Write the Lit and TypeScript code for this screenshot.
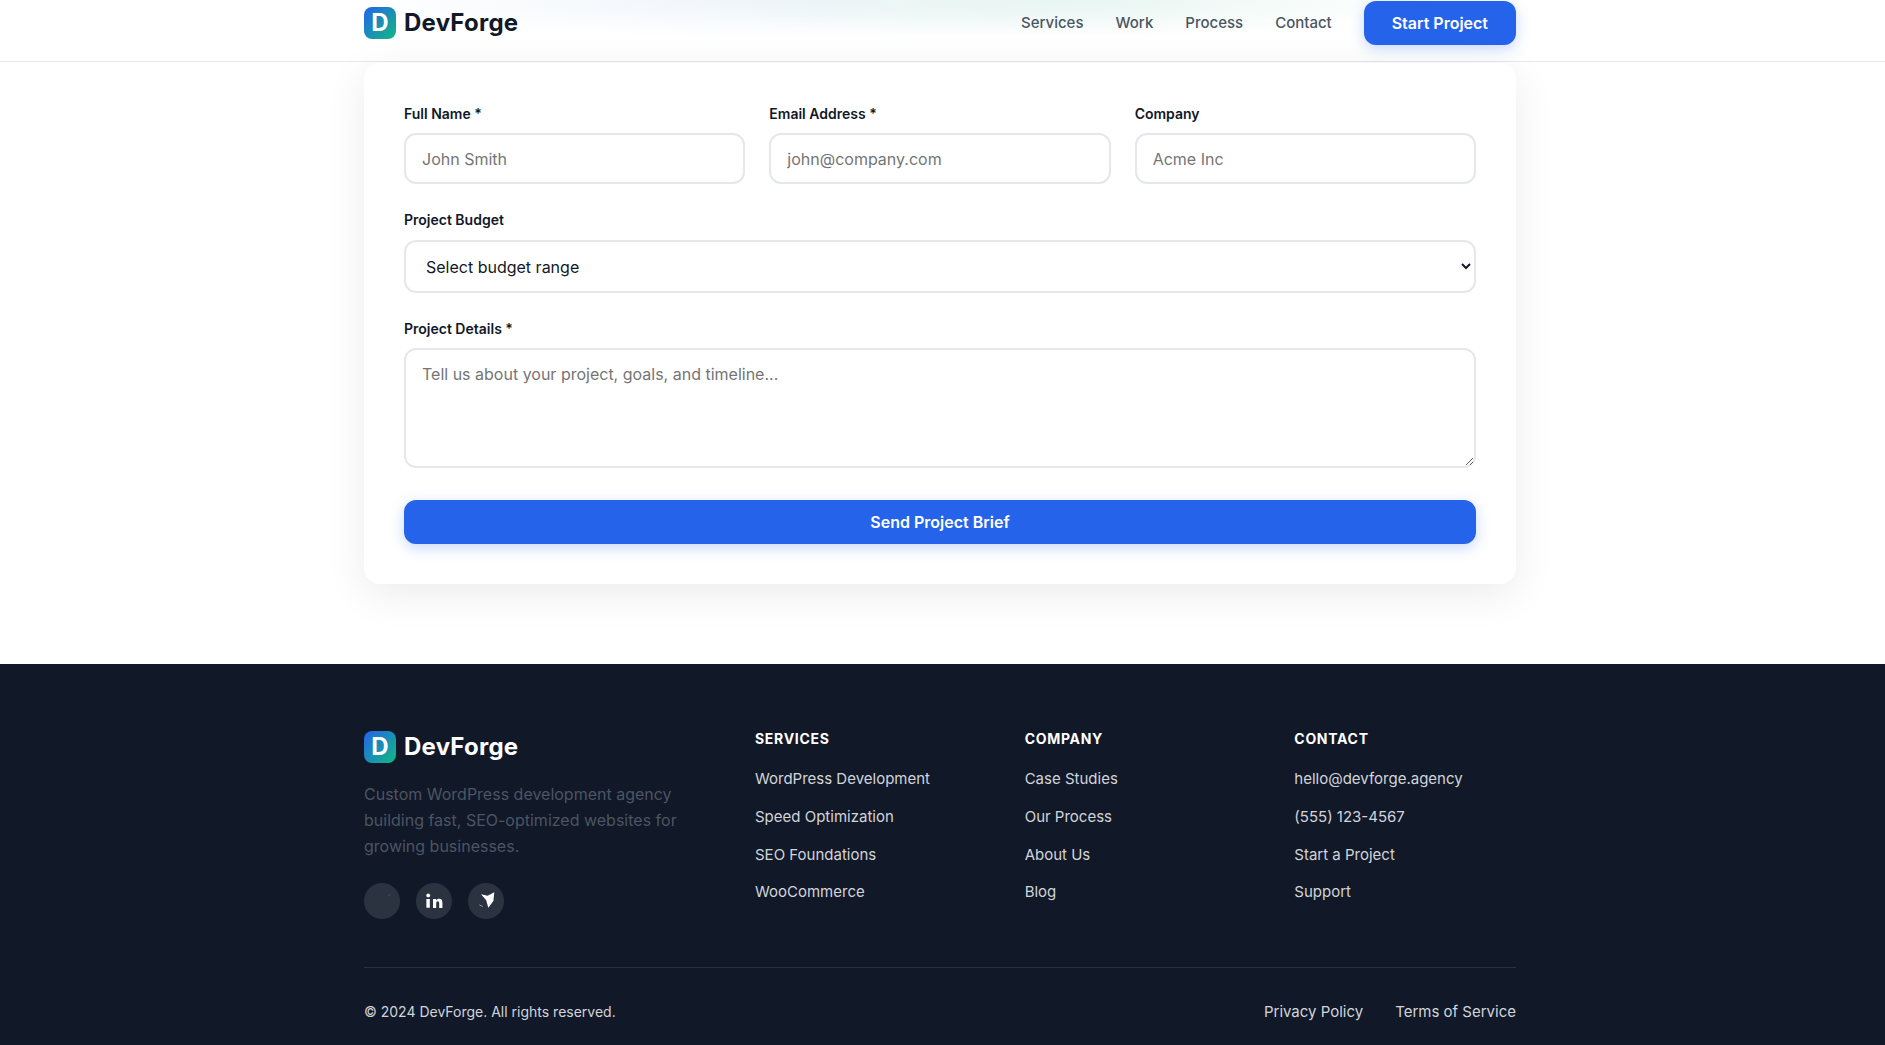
import { LitElement, html, css, svg } from 'lit';
import { customElement } from 'lit/decorators.js';

const navLinks = ['Services', 'Work', 'Process', 'Contact'];

const footerColumns = [
  { title: 'Services', links: ['WordPress Development', 'Speed Optimization', 'SEO Foundations', 'WooCommerce'] },
  { title: 'Company', links: ['Case Studies', 'Our Process', 'About Us', 'Blog'] },
  { title: 'Contact', links: ['hello@devforge.agency', '(555) 123-4567', 'Start a Project', 'Support'] }
];

// the social glyphs are half broken in the reference, so they are traced as they appear
const socialIcons = [
  svg`<path d="M23.3 12.9 26.6 11.2 26.4 11.7 23.6 13.1Z" fill="#8b929c" />`,
  svg`<circle cx="12.2" cy="12.4" r="1.9" fill="#fff" />
    <path d="M10.4 16h3.4v8.8h-3.4zM17 16h3.2v1.4c.8-1.1 1.7-1.7 3-1.7 2.4 0 3.2 1.6 3.2 4.2v5h-3.2v-4.5c0-1.4-.4-2.1-1.4-2.1s-1.6.8-1.6 2.1v4.5H17z" fill="#fff" />`,
  svg`<path d="M13 11.2 19.6 12.8 26.3 9.3 25.4 18 20.3 24.8 18.2 17.2Z" fill="#fff" />
    <path d="M11.3 21.4 14.8 23.2 14.4 23.7 11.2 22Z" fill="#d1d5db" />`
];

@customElement('app-root')
export default class AppRoot extends LitElement {
  static styles = css`
    :host {
      display: flex;
      flex-direction: column;
      height: 1045px;
      overflow: hidden;
      background-color: #fff;
      color: #111827;
      font-family: Inter, 'Liberation Sans', sans-serif;
      line-height: 1.6;
    }

    .container {
      width: 1152px;
      margin-left: 364px;
    }

    .header {
      flex: none;
      height: 61px;
      border-bottom: 1px solid #e5e7eb;
      background-color: #fff;
      background-image:
        radial-gradient(ellipse 380px 38px at 1060px 0, #e7f6f1, rgba(255, 255, 255, 0)),
        radial-gradient(ellipse 460px 38px at 800px 0, #eef4fa, rgba(255, 255, 255, 0));
    }

    .header-row {
      display: flex;
      align-items: center;
      justify-content: space-between;
      padding-top: 1px;
      height: 44px;
    }

    .logo {
      display: flex;
      align-items: center;
      gap: 8px;
      font-size: 24px;
      font-weight: 700;
      letter-spacing: 0.01em;
    }

    .logo-mark {
      display: flex;
      align-items: center;
      justify-content: center;
      width: 32px;
      height: 32px;
      border-radius: 8px;
      background: linear-gradient(135deg, #2563eb, #10b981);
      color: #fff;
      font-size: 24px;
      font-weight: 700;
      letter-spacing: 0;
    }

    .nav {
      display: flex;
      align-items: center;
      gap: 32px;
      font-size: 15px;
      font-weight: 500;
      color: #4b5563;
    }

    .nav-cta {
      padding: 10px 28px;
      border-radius: 12px;
      background-color: #2563eb;
      color: #fff;
      font-size: 16px;
      font-weight: 600;
      line-height: 24px;
      box-shadow: 0 4px 14px rgba(37, 99, 235, 0.25);
    }

    .section {
      flex: none;
      padding-bottom: 80px;
    }

    .card {
      box-sizing: border-box;
      margin-top: 0.6px;
      height: 521.4px;
      padding: 40px;
      border-radius: 16px;
      background-color: #fff;
      box-shadow: 0 10px 40px rgba(0, 0, 0, 0.08);
    }

    .row {
      display: grid;
      grid-template-columns: repeat(3, 1fr);
      gap: 24px;
      margin-bottom: 25px;
    }

    .field {
      display: block;
      margin-bottom: 25px;
    }

    .row .field {
      margin-bottom: 0;
    }

    .field-label {
      display: block;
      margin-bottom: 8px;
      font-size: 14px;
      font-weight: 600;
    }

    .input,
    .select,
    .textarea {
      display: block;
      box-sizing: border-box;
      width: 100%;
      padding: 14px 16px;
      border: 2px solid #e5e7eb;
      border-radius: 12px;
      background-color: #fff;
      color: #111827;
      font-family: inherit;
      font-size: 16px;
      outline: none;
    }

    .input {
      height: 51.4px;
    }

    .select {
      height: 53px;
    }

    .textarea {
      height: 120px;
      resize: vertical;
    }

    .submit {
      display: block;
      width: 100%;
      height: 44px;
      margin-top: 32px;
      border: none;
      border-radius: 12px;
      background-color: #2563eb;
      color: #fff;
      font-family: inherit;
      font-size: 16px;
      font-weight: 600;
      box-shadow: 0 4px 14px rgba(37, 99, 235, 0.25);
    }

    .footer {
      flex: 1;
      padding-top: 64px;
      background-color: #111827;
      color: #d1d5db;
    }

    .footer-grid {
      display: grid;
      grid-template-columns: 343px repeat(3, 1fr);
      gap: 48px;
      padding-bottom: 48px;
      border-bottom: 1px solid #293040;
    }

    .footer .logo {
      color: #fff;
    }

    .footer-brand .logo {
      margin-bottom: 16px;
    }

    .footer-desc {
      margin: 0 0 24px;
      font-size: 16px;
      color: #4b5563;
    }

    .social {
      display: flex;
      gap: 16px;
    }

    .social-link {
      width: 36px;
      height: 36px;
      border-radius: 50%;
      background-color: #2b3341;
    }

    .social-link svg {
      display: block;
    }

    .footer-title {
      margin: 0 0 16px;
      font-size: 14px;
      font-weight: 700;
      letter-spacing: 0.05em;
      text-transform: uppercase;
      color: #fff;
    }

    .footer-links {
      display: flex;
      flex-direction: column;
      gap: 12px;
      margin: 0;
      padding: 0;
      list-style: none;
      font-size: 15px;
      line-height: 25.6px;
    }

    .footer-bottom {
      display: flex;
      align-items: center;
      justify-content: space-between;
      padding-top: 32px;
      font-size: 14px;
    }

    .legal {
      display: flex;
      gap: 32px;
      font-size: 15px;
    }
  `;

  private renderLogo() {
    return html`<div class="logo"><span class="logo-mark">D</span>DevForge</div>`;
  }

  render() {
    return html`
      <header class="header">
        <div class="container header-row">
          ${this.renderLogo()}
          <nav class="nav">
            ${navLinks.map((link) => html`<span>${link}</span>`)}
            <span class="nav-cta">Start Project</span>
          </nav>
        </div>
      </header>

      <section class="section">
        <form class="container card">
          <div class="row">
            <label class="field">
              <span class="field-label">Full Name *</span>
              <input class="input" type="text" placeholder="John Smith" />
            </label>
            <label class="field">
              <span class="field-label">Email Address *</span>
              <input class="input" type="email" placeholder="john@company.com" />
            </label>
            <label class="field">
              <span class="field-label">Company</span>
              <input class="input" type="text" placeholder="Acme Inc" />
            </label>
          </div>
          <label class="field">
            <span class="field-label">Project Budget</span>
            <select class="select">
              <option>Select budget range</option>
            </select>
          </label>
          <label class="field">
            <span class="field-label">Project Details *</span>
            <textarea class="textarea" placeholder="Tell us about your project, goals, and timeline..."></textarea>
          </label>
          <button class="submit" type="button">Send Project Brief</button>
        </form>
      </section>

      <footer class="footer">
        <div class="container">
          <div class="footer-grid">
            <div class="footer-brand">
              ${this.renderLogo()}
              <p class="footer-desc">Custom WordPress development agency building fast, SEO-optimized websites for growing businesses.</p>
              <div class="social">
                ${socialIcons.map(
                  (icon) => html`<span class="social-link"><svg width="36" height="36" viewBox="0 0 36 36">${icon}</svg></span>`
                )}
              </div>
            </div>
            ${footerColumns.map(
              (col) => html`
                <div>
                  <h4 class="footer-title">${col.title}</h4>
                  <ul class="footer-links">
                    ${col.links.map((link) => html`<li>${link}</li>`)}
                  </ul>
                </div>
              `
            )}
          </div>
          <div class="footer-bottom">
            <span>© 2024 DevForge. All rights reserved.</span>
            <div class="legal"><span>Privacy Policy</span><span>Terms of Service</span></div>
          </div>
        </div>
      </footer>
    `;
  }
}
